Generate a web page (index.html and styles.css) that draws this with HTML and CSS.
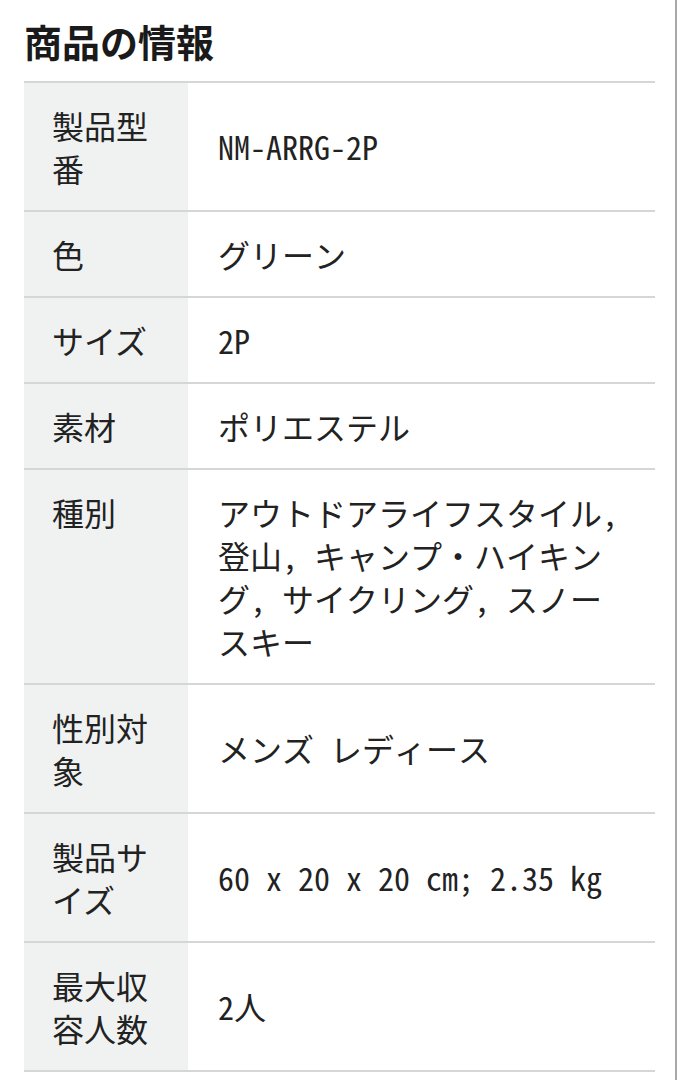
FILE: index.html
```html
<!DOCTYPE html>
<html lang="ja">
<head>
<meta charset="utf-8">
<link rel="stylesheet" href="styles.css">
</head>
<body>
<div class="page">
  <h1 class="title">商品の情報</h1>
  <div class="spec">
    <div class="row"><div class="label">製品型番</div><div class="value">NM-ARRG-2P</div></div>
    <div class="row"><div class="label">色</div><div class="value">グリーン</div></div>
    <div class="row"><div class="label">サイズ</div><div class="value">2P</div></div>
    <div class="row"><div class="label">素材</div><div class="value">ポリエステル</div></div>
    <div class="row"><div class="label">種別</div><div class="value">アウトドアライフスタイル, 登山, キャンプ・ハイキング, サイクリング, スノースキー</div></div>
    <div class="row"><div class="label">性別対象</div><div class="value">メンズ レディース</div></div>
    <div class="row"><div class="label">製品サイズ</div><div class="value">60 x 20 x 20 cm; 2.35 kg</div></div>
    <div class="row"><div class="label">最大収容人数</div><div class="value">2人</div></div>
  </div>
</div>
</body>
</html>
```
FILE: styles.css
```css
html, body {
  margin: 0;
  padding: 0;
  background: #ffffff;
}
.page {
  width: 677px;
  min-height: 1080px;
  border-right: 2px solid #a8a8a8;
  padding: 0 20px 0 24px;
  box-sizing: border-box;
  color: #222222;
  font-family: "Noto Sans CJK JP", sans-serif;
}
.title {
  margin: 0;
  padding-top: 16px;
  height: 81px;
  box-sizing: border-box;
  font-size: 38px;
  line-height: 50px;
  font-weight: 700;
  color: #1a1a1a;
}
.spec {
  border-top: 2px solid #d6d6d6;
}
.row {
  display: grid;
  grid-template-columns: 164px 1fr;
  border-bottom: 2px solid #d6d6d6;
}
.label {
  background: #f0f2f2;
  padding: 20.5px 28px;
  font-size: 32px;
  line-height: 43px;
  align-self: stretch;
}
.value {
  padding: 20.5px 30px;
  font-family: "Noto Sans Mono CJK JP", "Noto Sans CJK JP", monospace;
  font-size: 32px;
  line-height: 43px;
  align-self: center;
}
```
